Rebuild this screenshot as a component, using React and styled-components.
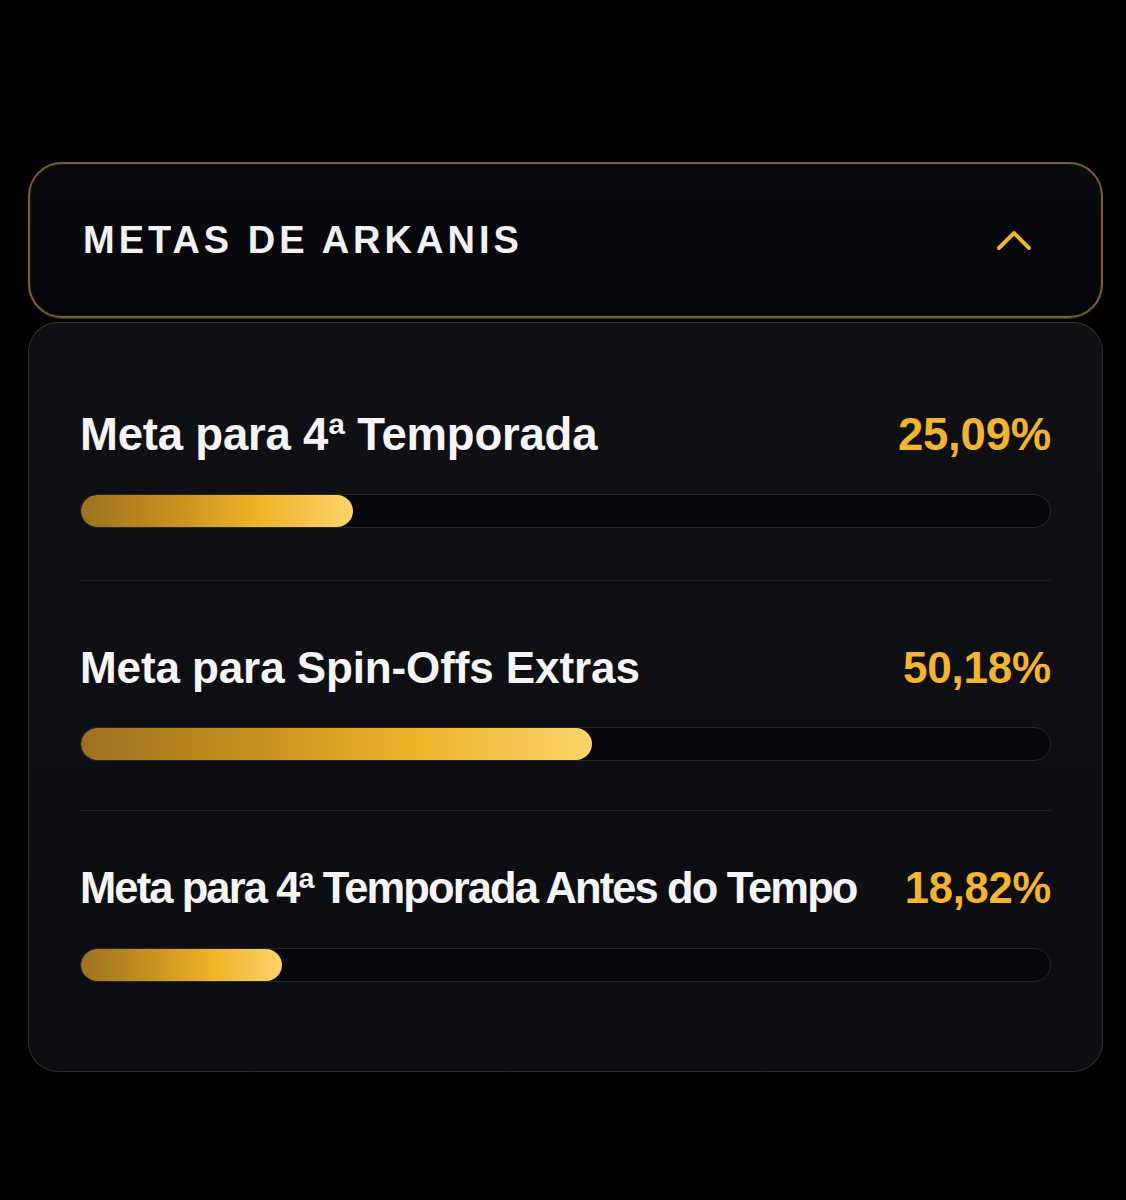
import React from 'react'
import styled, { createGlobalStyle } from 'styled-components'

const GlobalStyle = createGlobalStyle`
  * { box-sizing: border-box; }
  body {
    margin: 0;
    background: #000000;
    font-family: "Liberation Sans", Arial, sans-serif;
  }
`

const Page = styled.div`
  width: 1126px;
  min-height: 1200px;
  padding: 162px 23px 0 28px;
  display: flex;
  flex-direction: column;
  gap: 4px;
`

const Header = styled.div`
  height: 156px;
  display: flex;
  align-items: center;
  justify-content: space-between;
  padding: 0 70px 0 53px;
  border-radius: 34px;
  border: 2px solid #7c5e2e;
  background: linear-gradient(180deg, #090a0e 0%, #05060a 100%);
  box-shadow: inset 0 0 0 1px rgba(255, 200, 110, 0.06), 0 1px 0 rgba(150, 110, 50, 0.4);
`

const Title = styled.h2`
  margin: 0;
  color: #f1f1f1;
  font-size: 38px;
  font-weight: 700;
  letter-spacing: 4px;
  line-height: 1;
`

const Chevron = styled.svg`
  width: 34px;
  height: 22px;
  display: block;
`

const Body = styled.div`
  border-radius: 30px;
  border: 1px solid #2f2d29;
  border-top-color: #3d3628;
  background: linear-gradient(180deg, #0f1014 0%, #0e0f13 60%, #0c0d10 100%);
  padding: 84px 51px 89px;
  display: flex;
  flex-direction: column;
`

const Goal = styled.div`
  display: flex;
  flex-direction: column;
  gap: 32px;
`

const GoalHead = styled.div`
  display: flex;
  align-items: baseline;
  justify-content: space-between;
  gap: 20px;
  font-size: ${({ $size }) => $size}px;
  font-weight: 700;
  line-height: 55px;
`

const GoalName = styled.span`
  color: #f5f5f5;
  letter-spacing: ${({ $track }) => $track}px;
`

const Percent = styled.span`
  color: #f3b430;
  letter-spacing: -0.2px;
`

const Track = styled.div`
  height: 34px;
  border-radius: 17px;
  border: 1px solid #26272c;
  background: #07080b;
  overflow: hidden;
`

const Fill = styled.div`
  height: 100%;
  border-radius: 17px;
  background: linear-gradient(90deg, #9c7220 0%, #c8911f 35%, #efb328 65%, #fbd36c 100%);
`

const Divider = styled.hr`
  margin: ${({ $before }) => $before}px 0 ${({ $after }) => $after}px;
  border: 0;
  height: 1px;
  background: #232428;
`

const goals = [
  { name: 'Meta para 4ª Temporada', pct: '25,09%', fill: 28.1, size: 45.5, track: -0.2 },
  { name: 'Meta para Spin-Offs Extras', pct: '50,18%', fill: 52.7, size: 44, track: -0.1 },
  { name: 'Meta para 4ª Temporada Antes do Tempo', pct: '18,82%', fill: 20.7, size: 43.5, track: -1.9 },
]

function App() {
  return (
    <>
      <GlobalStyle />
      <Page>
        <Header>
          <Title>METAS DE ARKANIS</Title>
          <Chevron viewBox="0 0 34 22">
            <polyline points="2,19 17,4 32,19" fill="none" stroke="#f0b429" strokeWidth="4" strokeLinecap="round" strokeLinejoin="round" />
          </Chevron>
        </Header>
        <Body>
          {goals.map((g, i) => (
            <React.Fragment key={g.name}>
              {i === 1 && <Divider $before={52} $after={59} />}
              {i === 2 && <Divider $before={49} $after={50} />}
              <Goal>
                <GoalHead $size={g.size}>
                  <GoalName $track={g.track}>{g.name}</GoalName>
                  <Percent>{g.pct}</Percent>
                </GoalHead>
                <Track>
                  <Fill style={{ width: `${g.fill}%` }} />
                </Track>
              </Goal>
            </React.Fragment>
          ))}
        </Body>
      </Page>
    </>
  )
}

export default App
